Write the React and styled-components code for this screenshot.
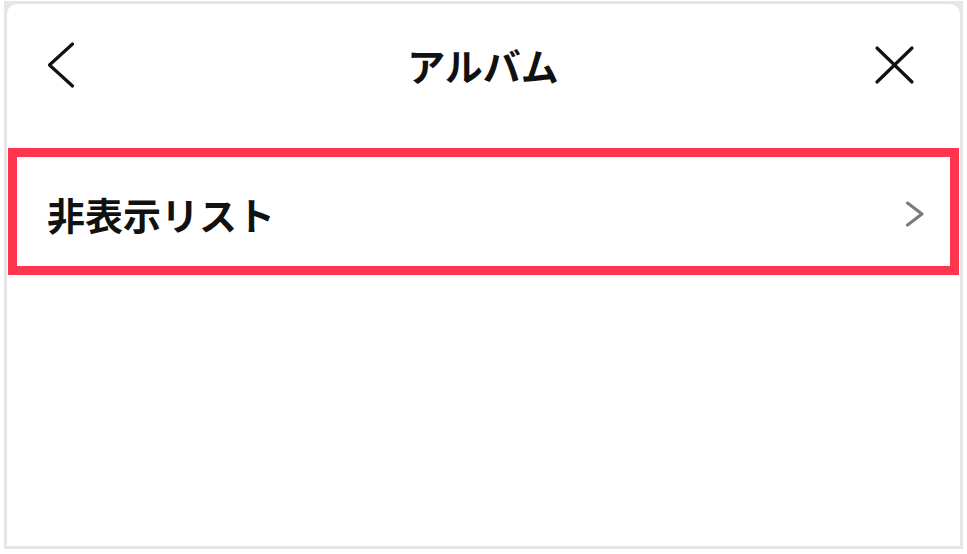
import React from "react";
import styled, { createGlobalStyle } from "styled-components";

const Global = createGlobalStyle`
  html, body { margin: 0; padding: 0; background: #ffffff; }
  body { font-family: "Noto Sans CJK JP", "Noto Sans", sans-serif; }
`;

const Frame = styled.div`
  box-sizing: border-box;
  margin: 1px 0 0 4px;
  width: 959px;
  height: 548px;
  padding: 3px;
  background: #e6e6e6;
`;

const Screen = styled.div`
  height: 100%;
  background: #ffffff;
  border-radius: 10px 10px 0 0;
  display: flex;
  flex-direction: column;
`;

const Header = styled.header`
  height: 122px;
  display: grid;
  grid-template-columns: 1fr auto 1fr;
  align-items: center;
  padding: 0 45px 0 40px;
`;

const Title = styled.h1`
  margin: 0 0 0 4px;
  font-size: 38px;
  font-weight: 700;
  color: #111111;
  line-height: 1;
`;

const IconButton = styled.button`
  border: 0;
  background: none;
  padding: 0;
  display: flex;
  justify-self: ${(p) => (p.$end ? "end" : "start")};
  cursor: pointer;
`;

const List = styled.div`
  padding: 22px 1px 0;
`;

const Row = styled.div`
  box-sizing: border-box;
  height: 127px;
  border: 9px solid #ff344e;
  display: flex;
  align-items: center;
  justify-content: space-between;
  padding: 4px 25px 0 30px;
`;

const RowLabel = styled.span`
  font-size: 38px;
  font-weight: 700;
  color: #111111;
`;

export default function App() {
  return (
    <>
      <Global />
      <Frame>
        <Screen>
          <Header>
            <IconButton aria-label="back">
              <svg width="28" height="48" viewBox="0 0 28 48">
                <path d="M25.5 3 L2.5 24 L25.5 45" fill="none" stroke="#111" strokeWidth="3.2" strokeLinecap="round" strokeLinejoin="round" />
              </svg>
            </IconButton>
            <Title>アルバム</Title>
            <IconButton $end aria-label="close">
              <svg width="41" height="40" viewBox="0 0 41 40">
                <path d="M3 3 L38 37 M38 3 L3 37" fill="none" stroke="#111" strokeWidth="3.2" strokeLinecap="round" />
              </svg>
            </IconButton>
          </Header>
          <List>
            <Row>
              <RowLabel>非表示リスト</RowLabel>
              <svg width="20" height="26" viewBox="0 0 20 26">
                <path d="M2.5 2 L17 13 L2.5 24" fill="none" stroke="#7a7a7a" strokeWidth="3" strokeLinecap="round" strokeLinejoin="round" />
              </svg>
            </Row>
          </List>
        </Screen>
      </Frame>
    </>
  );
}
